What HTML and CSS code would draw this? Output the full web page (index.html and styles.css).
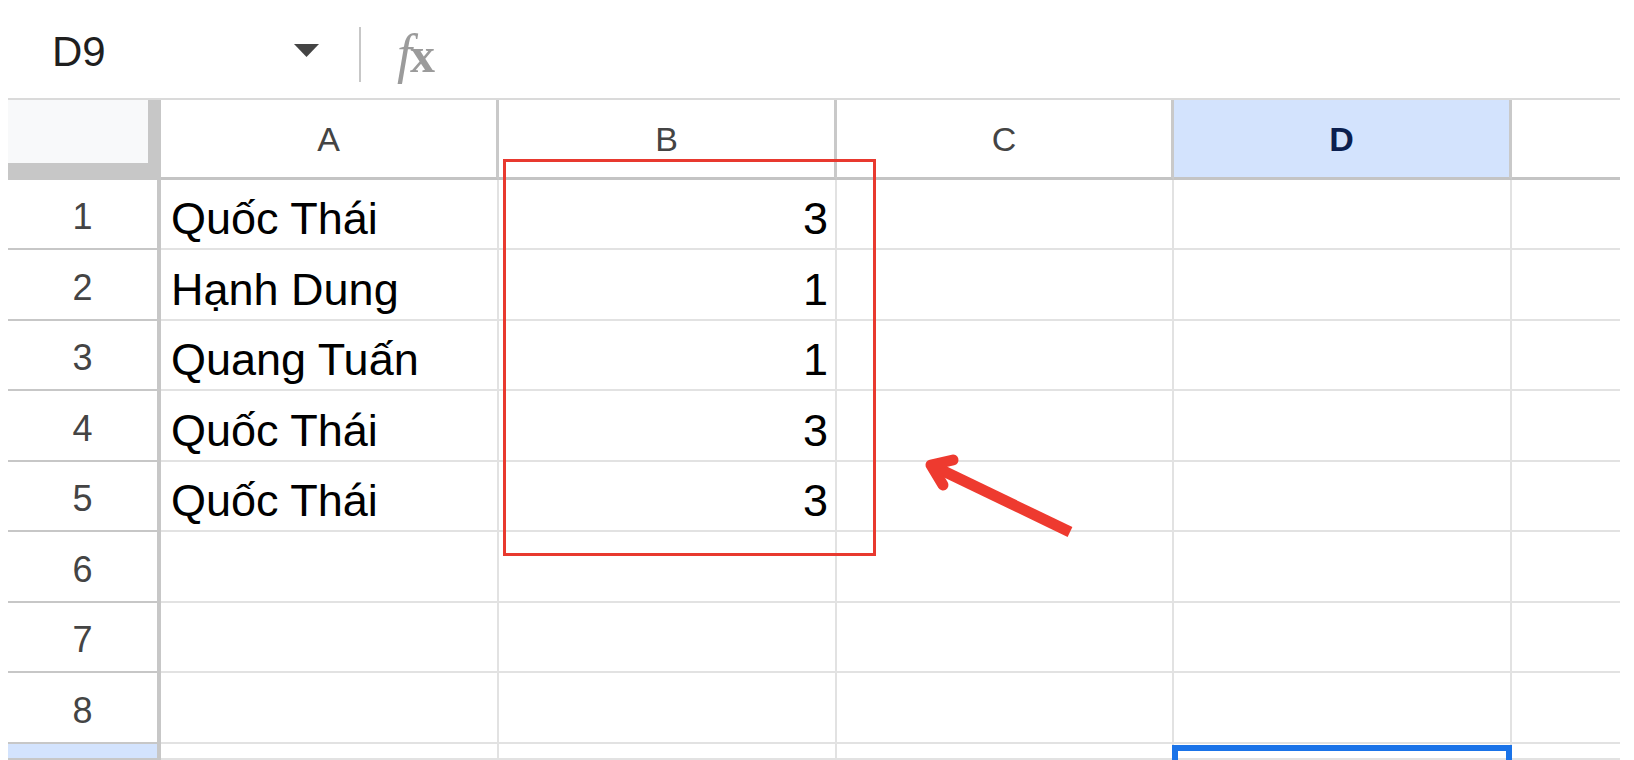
FILE: index.html
```html
<!DOCTYPE html>
<html lang="vi">
<head>
<meta charset="utf-8">
<title>Sheet</title>
<link rel="stylesheet" href="styles.css">
</head>
<body>
<div class="page">
  <div class="formula-bar">
    <div class="name-box">
      <span class="cell-ref">D9</span>
      <svg class="dropdown" width="25" height="13" viewBox="0 0 25 13"><polygon points="0,0 25,0 12.5,13" fill="#444"/></svg>
    </div>
    <div class="separator"></div>
    <div class="fx"><span class="fx-f">f</span><span class="fx-x">x</span></div>
  </div>

  <div class="sheet">
    <div class="corner"></div>
    <div class="col-head">A</div>
    <div class="col-head">B</div>
    <div class="col-head">C</div>
    <div class="col-head active">D</div>
    <div class="col-head last"></div>

    <div class="row-head">1</div>
    <div class="cell">Quốc Thái</div>
    <div class="cell num">3</div>
    <div class="cell"></div>
    <div class="cell"></div>
    <div class="cell last"></div>

    <div class="row-head">2</div>
    <div class="cell">Hạnh Dung</div>
    <div class="cell num">1</div>
    <div class="cell"></div>
    <div class="cell"></div>
    <div class="cell last"></div>

    <div class="row-head">3</div>
    <div class="cell">Quang Tuấn</div>
    <div class="cell num">1</div>
    <div class="cell"></div>
    <div class="cell"></div>
    <div class="cell last"></div>

    <div class="row-head">4</div>
    <div class="cell">Quốc Thái</div>
    <div class="cell num">3</div>
    <div class="cell"></div>
    <div class="cell"></div>
    <div class="cell last"></div>

    <div class="row-head">5</div>
    <div class="cell">Quốc Thái</div>
    <div class="cell num">3</div>
    <div class="cell"></div>
    <div class="cell"></div>
    <div class="cell last"></div>

    <div class="row-head">6</div>
    <div class="cell"></div>
    <div class="cell"></div>
    <div class="cell"></div>
    <div class="cell"></div>
    <div class="cell last"></div>

    <div class="row-head">7</div>
    <div class="cell"></div>
    <div class="cell"></div>
    <div class="cell"></div>
    <div class="cell"></div>
    <div class="cell last"></div>

    <div class="row-head">8</div>
    <div class="cell"></div>
    <div class="cell"></div>
    <div class="cell"></div>
    <div class="cell"></div>
    <div class="cell last"></div>

    <div class="row-head active"></div>
    <div class="cell"></div>
    <div class="cell"></div>
    <div class="cell"></div>
    <div class="cell selected"></div>
    <div class="cell last"></div>
  </div>

  <div class="highlight-box"></div>
  <svg class="arrow" width="165" height="95" viewBox="0 0 165 95">
    <path d="M155 82 L18 16" stroke="#ee3a2f" stroke-width="11" fill="none" stroke-linecap="butt"/>
    <polyline points="38,10 16,15 28,35" stroke="#ee3a2f" stroke-width="11" fill="none" stroke-linecap="round" stroke-linejoin="round"/>
  </svg>
</div>
</body>
</html>
```

FILE: styles.css
```css
html, body {
  margin: 0;
  padding: 0;
  background: #ffffff;
  overflow: hidden;
}

.page {
  position: relative;
  width: 1634px;
  height: 760px;
  overflow: hidden;
  font-family: "Liberation Sans", Arial, sans-serif;
}

/* Formula bar */
.formula-bar {
  height: 98px;
  display: flex;
  align-items: flex-start;
}

.name-box {
  display: flex;
  align-items: flex-start;
  width: 267px;
  margin-left: 52px;
  justify-content: space-between;
}

.cell-ref {
  font-size: 42px;
  line-height: 42px;
  margin-top: 31px;
  color: #1f1f1f;
}

.dropdown {
  margin-top: 44px;
  display: block;
}

.separator {
  width: 2px;
  height: 55px;
  margin-top: 27px;
  margin-left: 40px;
  background: #c7c7c7;
}

.fx {
  margin-top: 27px;
  margin-left: 36px;
  font-family: "Liberation Serif", "Times New Roman", serif;
  font-size: 54px;
  line-height: 54px;
  color: #9b9b9b;
}

.fx-f {
  font-style: italic;
}

.fx-x {
  font-weight: bold;
  font-size: 50px;
  margin-left: -2px;
}

/* Sheet grid */
.sheet {
  margin-left: 8px;
  width: 1612px;
  display: grid;
  grid-template-columns: 153px 338px 338px 337px 338px 108px;
  grid-template-rows: 80px 70px 71px 70px 71px 70px 71px 70px 71px 16px;
  border-top: 2px solid #dadada;
}

.corner {
  box-sizing: border-box;
  background: #f8f9fa;
  border-right: 13px solid #c7c7c7;
  border-bottom: 17px solid #c7c7c7;
}

.col-head {
  box-sizing: border-box;
  display: flex;
  align-items: center;
  justify-content: center;
  border-right: 3px solid #c9c9c9;
  border-bottom: 3px solid #c4c4c4;
  font-size: 34px;
  line-height: 34px;
  color: #444444;
}

.col-head.active {
  background: #d3e3fd;
  color: #0b1f4f;
  font-weight: bold;
}

.col-head.last {
  border-right: none;
}

.row-head {
  box-sizing: border-box;
  display: flex;
  align-items: center;
  justify-content: center;
  padding-top: 6px;
  border-right: 4px solid #c7c7c7;
  border-bottom: 2px solid #c7c7c7;
  font-size: 36px;
  line-height: 36px;
  color: #444444;
}

.row-head.active {
  background: #d3e3fd;
}

.cell {
  box-sizing: border-box;
  position: relative;
  display: flex;
  align-items: flex-end;
  padding: 0 7px 7px 10px;
  border-right: 2px solid #e2e2e2;
  border-bottom: 2px solid #e2e2e2;
  font-size: 45px;
  line-height: 45px;
  color: #000000;
  white-space: nowrap;
}

.cell.num {
  justify-content: flex-end;
}

.cell.last {
  border-right: none;
}

.cell.selected::after {
  content: "";
  position: absolute;
  left: -2px;
  right: -2px;
  top: 1px;
  height: 40px;
  border: 6px solid #1a73e8;
}

/* Annotations */
.highlight-box {
  position: absolute;
  left: 503px;
  top: 159px;
  width: 373px;
  height: 397px;
  box-sizing: border-box;
  border: 3px solid #e8392f;
}

.arrow {
  position: absolute;
  left: 915px;
  top: 450px;
}
```
